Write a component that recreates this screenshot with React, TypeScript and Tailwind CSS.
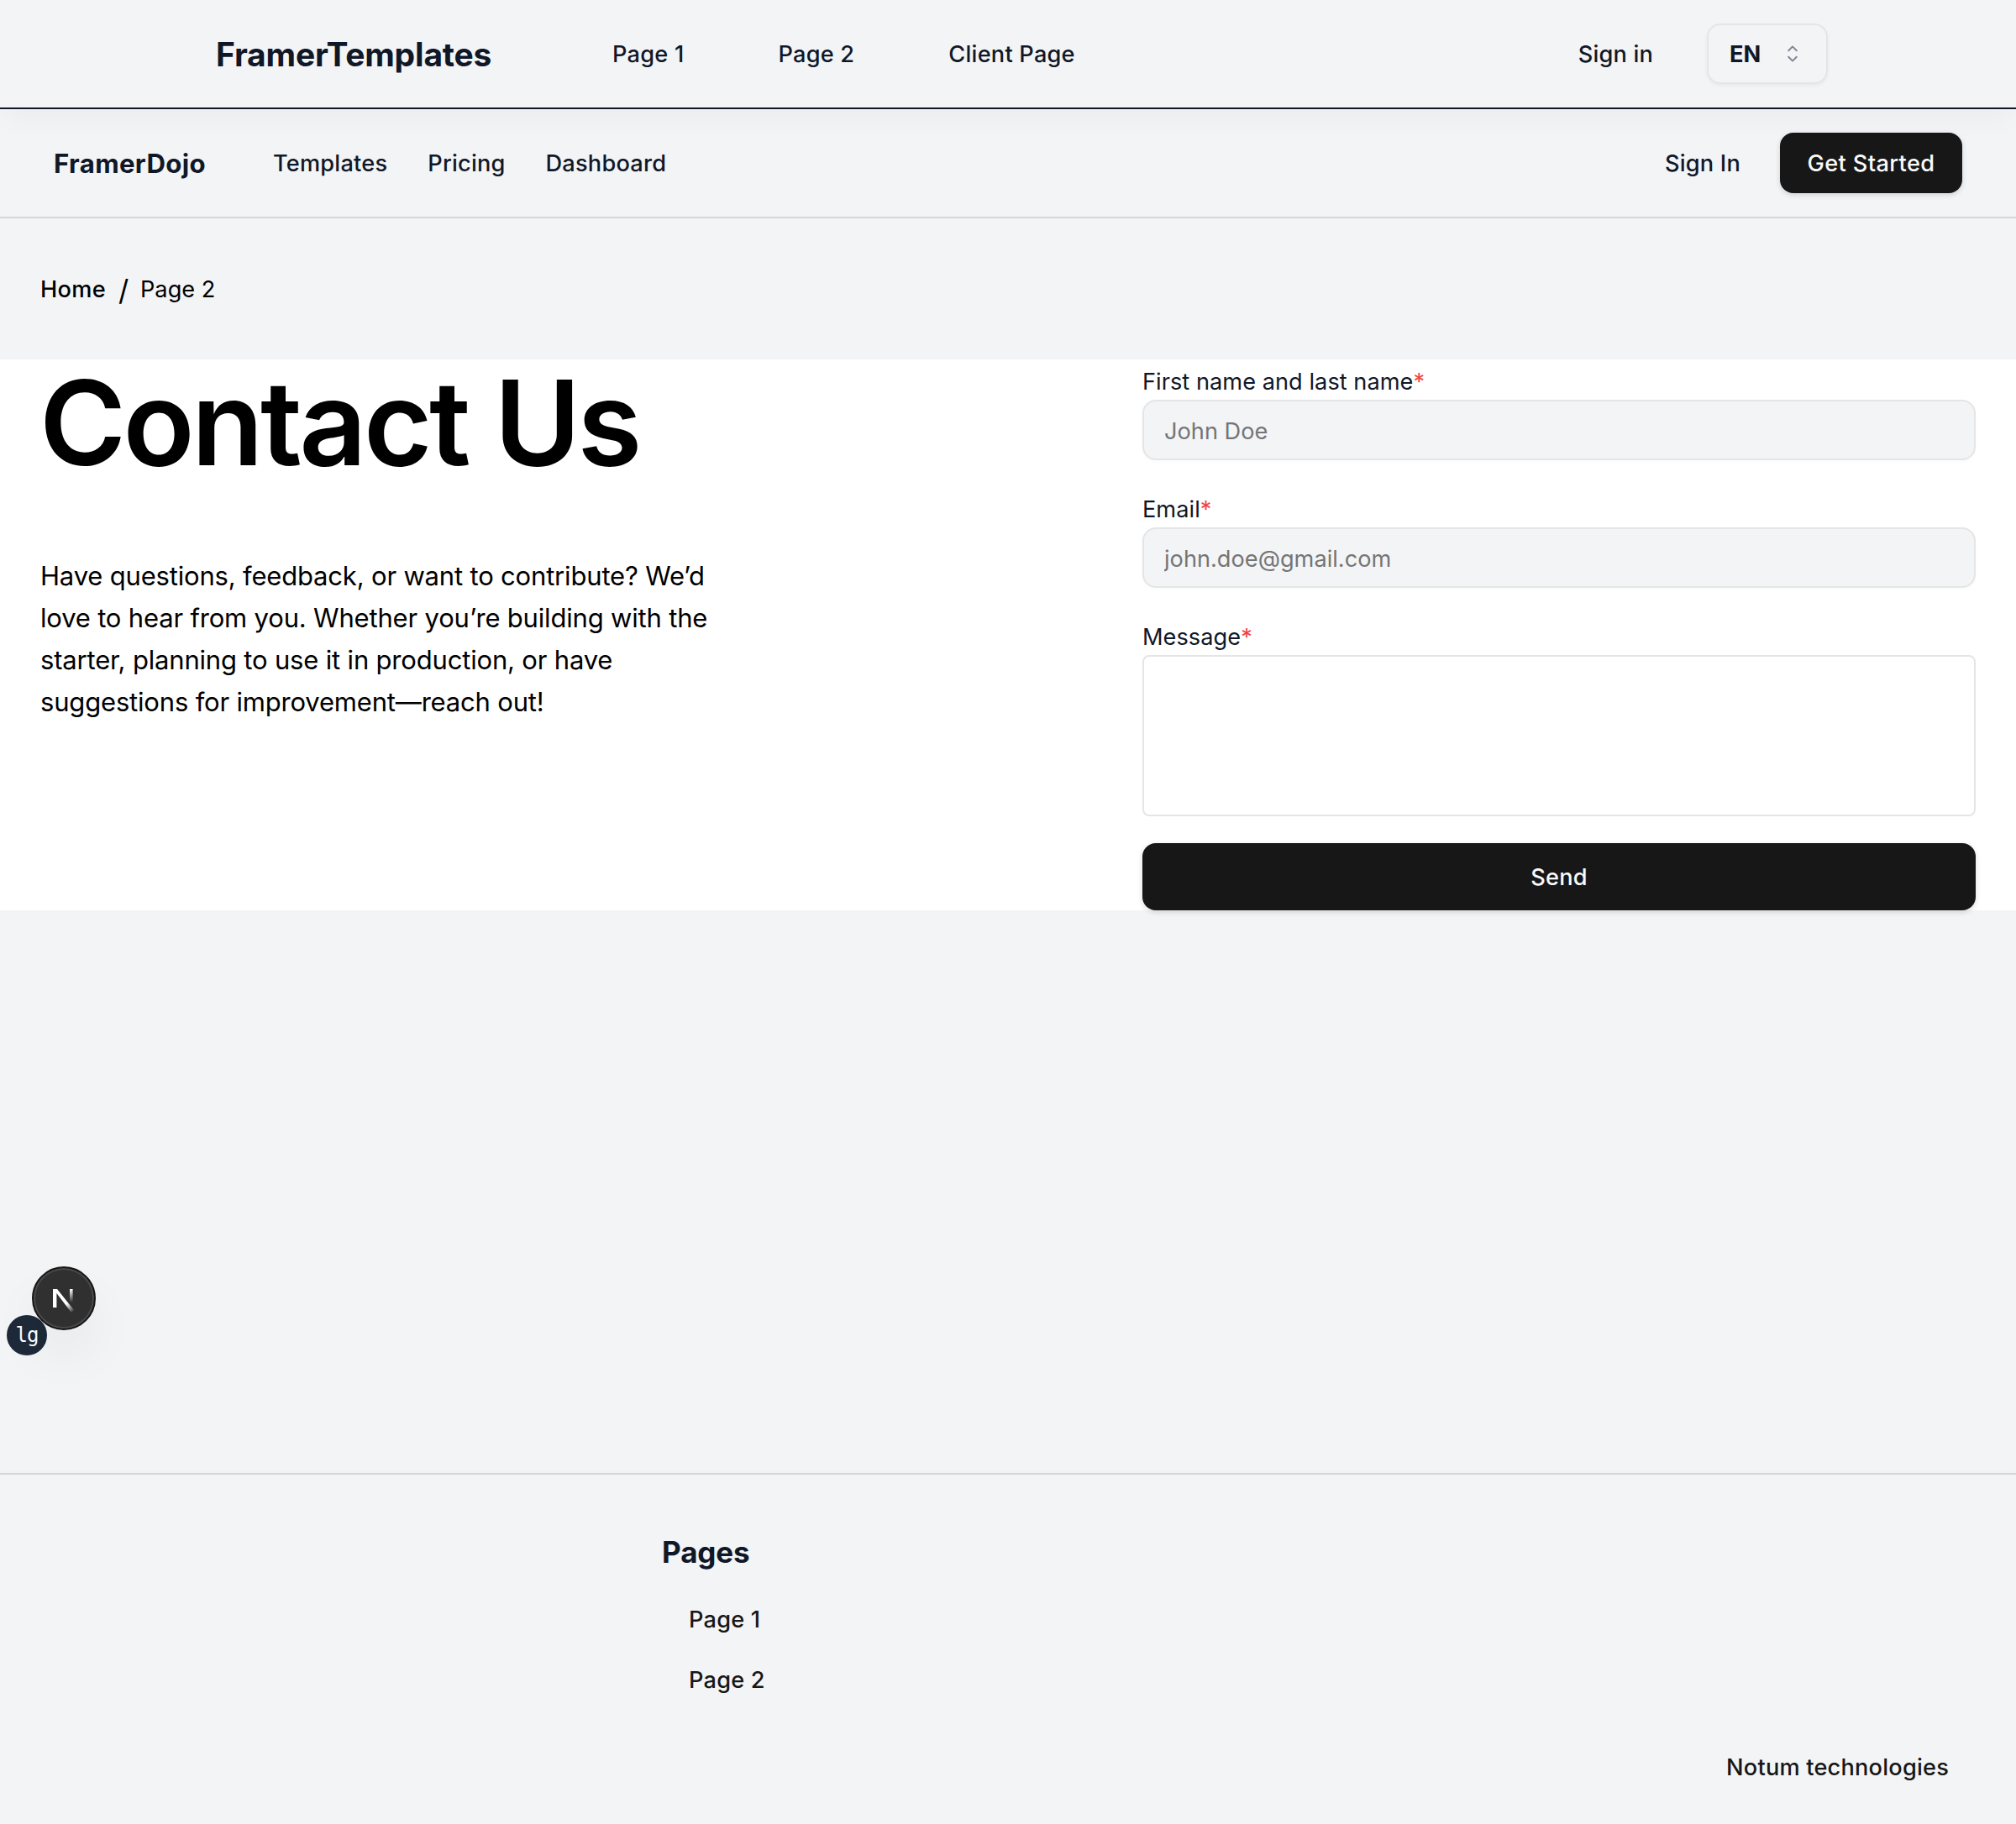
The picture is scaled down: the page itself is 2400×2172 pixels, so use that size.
import React from "react";

const links = ["Page 1", "Page 2", "Client Page"];
const dojoLinks = ["Templates", "Pricing", "Dashboard"];

function TopBar() {
  return (
    <header className="relative z-10 flex h-[130px] items-center border-b-2 border-[#101828] bg-[#f3f4f6] pr-[224px] pl-[257px] text-[#101828] shadow-[0_20px_30px_-6px_rgba(0,0,0,0.03)]">
      <a className="w-[472px] text-[39px] leading-none font-bold tracking-[-0.2px] whitespace-nowrap">FramerTemplates</a>
      <nav className="flex gap-28 pt-0.5 text-[27.2px] font-medium tracking-[0.22px] whitespace-nowrap">
        {links.map((l) => (
          <a key={l}>{l}</a>
        ))}
      </nav>
      <div className="ml-auto flex items-center gap-16 text-[27.2px]">
        <a className="pt-0.5 font-medium tracking-[0.18px]">Sign in</a>
        <button className="flex h-[72px] w-36 items-center justify-between rounded-2xl border-2 border-[#e5e5e5] px-6 shadow-[0_2px_4px_rgba(0,0,0,0.05)]">
          <span className="pt-0.5 pl-px font-bold">EN</span>
          <svg className="size-8 opacity-50" viewBox="0 0 15 15" fill="currentColor">
            <path d="M4.93 5.43a.45.45 0 0 0 .64.64L7.5 4.14l1.93 1.93a.45.45 0 0 0 .64-.64L7.82 3.18a.45.45 0 0 0-.64 0zM10.07 9.57a.45.45 0 0 0-.64-.64L7.5 10.86 5.57 8.93a.45.45 0 0 0-.64.64l2.25 2.25a.45.45 0 0 0 .64 0z" />
          </svg>
        </button>
      </div>
    </header>
  );
}

function DojoBar() {
  return (
    <header className="flex h-[130px] items-center border-b-2 border-[#d1d5dc] px-16 text-[27.2px] text-[#101828]">
      <a className="w-[261px] pt-0.5 text-[31.2px] font-bold tracking-[0.35px]">FramerDojo</a>
      <nav className="flex gap-12 pt-0.5 font-medium tracking-[0.2px]">
        {dojoLinks.map((l) => (
          <a key={l}>{l}</a>
        ))}
      </nav>
      <div className="ml-auto flex items-center gap-[47px] font-medium tracking-[0.2px]">
        <a className="pt-0.5">Sign In</a>
        <button className="h-[72px] w-[217px] rounded-2xl bg-[#171717] pt-0.5 tracking-[0.35px] text-[#fafafa] shadow-[0_2px_6px_rgba(0,0,0,0.15)]">
          Get Started
        </button>
      </div>
    </header>
  );
}

function Label({ children }: { children: React.ReactNode }) {
  return (
    <label className="block h-12 leading-[53px] text-[27.2px] tracking-[0.03px] whitespace-nowrap text-[#101828]">
      {children}
      <span className="text-[#ef4444]">*</span>
    </label>
  );
}

function Field({ label, placeholder }: { label: string; placeholder: string }) {
  return (
    <div className="h-[152px]">
      <Label>{label}</Label>
      <input
        className="block h-[72px] w-full rounded-2xl border-2 border-[#e5e5e5] bg-[#f3f4f6] px-6 pt-0.5 text-[27.2px] shadow-[0_2px_4px_rgba(0,0,0,0.02)] placeholder:text-[#757575]"
        placeholder={placeholder}
      />
    </div>
  );
}

function Contact() {
  return (
    <section className="flex h-[656px] justify-between bg-white px-12">
      <div className="text-black">
        <h1 className="-ml-px text-[140px] leading-[151px] font-semibold tracking-[-3.7px]">Contact Us</h1>
        <p className="mt-[82px] text-[31px] leading-[50px] tracking-[-0.18px]">
          Have questions, feedback, or want to contribute? We’d
          <br />
          love to hear from you. Whether you’re building with the
          <br />
          starter, planning to use it in production, or have
          <br />
          suggestions for improvement—reach out!
        </p>
      </div>
      <form className="w-[992px]">
        <Field label="First name and last name" placeholder="John Doe" />
        <Field label="Email" placeholder="john.doe@gmail.com" />
        <Label>Message</Label>
        <textarea className="block h-48 w-full resize-none rounded-lg border-2 border-[#e5e5e5] bg-white" />
        <button
          type="button"
          className="mt-8 block h-20 w-full rounded-2xl bg-[#171717] pt-0.5 text-[27.2px] font-medium tracking-[0.2px] text-[#fafafa] shadow-[0_2px_6px_rgba(0,0,0,0.15)]"
        >
          Send
        </button>
      </form>
    </section>
  );
}

function DevBadges() {
  return (
    <>
      <div className="absolute top-[1566px] left-2 flex size-12 items-center justify-center rounded-full bg-[#1e2939] font-['DejaVu_Sans_Mono',monospace] text-[24px] tracking-[-1px] text-white">
        lg
      </div>
      <div className="absolute top-[1508px] left-[38px] flex size-[76px] items-center justify-center rounded-full border-2 border-[#171717] bg-[#303030] shadow-[inset_0_0_0_2px_#4a4a4a,0_32px_64px_-8px_rgba(0,0,0,0.08)]">
        <svg className="size-10" viewBox="0 0 40 40" fill="none">
          <defs>
            <linearGradient id="stem" x1="0" y1="9" x2="0" y2="25" gradientUnits="userSpaceOnUse">
              <stop stopColor="white" />
              <stop offset="1" stopColor="white" stopOpacity="0" />
            </linearGradient>
            <linearGradient id="diag" x1="24" y1="26" x2="32" y2="36" gradientUnits="userSpaceOnUse">
              <stop stopColor="white" />
              <stop offset="1" stopColor="white" stopOpacity="0" />
            </linearGradient>
          </defs>
          <path d="M7 9H12L32 34L29 37L11.4 14V31H7Z" fill="url(#diag)" />
          <path d="M27 9H30.6V25H27Z" fill="url(#stem)" />
        </svg>
      </div>
    </>
  );
}

function Footer() {
  return (
    <footer className="mt-[670px] h-[418px] border-t-2 border-[#d1d5dc] bg-[#f3f4f6] text-[27.2px] font-medium tracking-[0.2px] text-[#171717] shadow-[0_0_6px_rgba(0,0,0,0.03)]">
      <div className="ml-[788px] pt-[65px]">
        <h2 className="text-[35px] leading-[54px] font-bold tracking-[-0.1px] text-[#101828]">Pages</h2>
        <ul className="mt-[18px] ml-8 leading-[72px]">
          <li>Page 1</li>
          <li>Page 2</li>
        </ul>
      </div>
      <div className="mt-9 mr-20 text-right leading-[64px]">Notum technologies</div>
    </footer>
  );
}

export default function App() {
  return (
    <div className="relative h-[2172px] w-[2400px] overflow-hidden bg-[#f3f4f6] font-['Inter',sans-serif]">
      <TopBar />
      <DojoBar />
      <div className="flex h-[168px] items-center px-12 pt-0.5 text-[27.2px] text-black">
        <span className="w-[93px] font-medium tracking-[0.3px]">Home</span>
        <span className="w-[26px] text-[34px]">/</span>
        <span>Page 2</span>
      </div>
      <Contact />
      <Footer />
      <DevBadges />
    </div>
  );
}
